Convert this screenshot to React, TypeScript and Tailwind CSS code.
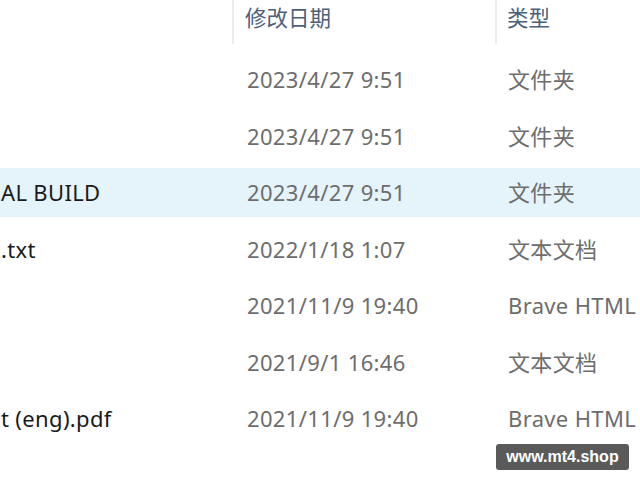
import React from "react";

const rows = [
  { name: "", date: "2023/4/27 9:51", type: "文件夹", hl: false },
  { name: "", date: "2023/4/27 9:51", type: "文件夹", hl: false },
  { name: "AL BUILD", date: "2023/4/27 9:51", type: "文件夹", hl: true },
  { name: ".txt", date: "2022/1/18 1:07", type: "文本文档", hl: false },
  { name: "", date: "2021/11/9 19:40", type: "Brave HTML", hl: false },
  { name: "", date: "2021/9/1 16:46", type: "文本文档", hl: false },
  { name: "t (eng).pdf", date: "2021/11/9 19:40", type: "Brave HTML", hl: false },
];

export default function App() {
  return (
    <div
      className="relative w-[640px] h-[480px] overflow-hidden bg-white"
      style={{ fontFamily: '"Noto Sans", "Open Sans", "Noto Sans CJK SC", sans-serif' }}
    >
      <div className="flex h-[44px] text-[21.5px] text-[#4c607a]">
        <div className="w-[234px] border-r-2 border-[#ececec]" />
        <div className="w-[263px] border-r-2 border-[#ececec] pl-[11px] pb-[7px] flex items-center">
          修改日期
        </div>
        <div className="flex-1 pl-[10px] pb-[7px] flex items-center">类型</div>
      </div>
      <div className="mt-[11px] flex flex-col gap-[7.5px]">
        {rows.map((r, i) => (
          <div
            key={i}
            className={
              "flex h-[49px] items-center text-[22px] tracking-[0.35px] " +
              (r.hl ? "bg-[#e5f3fb]" : "")
            }
          >
            <div className="w-[236px] pl-[1px] text-[#1a1a1a] whitespace-nowrap overflow-hidden">{r.name}</div>
            <div className="w-[262px] pl-[11px] text-[#6d6d6d] whitespace-nowrap">{r.date}</div>
            <div className="flex-1 pl-[10px] text-[#6d6d6d] whitespace-nowrap">{r.type}</div>
          </div>
        ))}
      </div>
      <div
        className="absolute left-[496px] top-[444px] w-[133px] h-[26px] rounded-[3px] bg-[#5a5a5a] text-white text-[16px] font-bold flex items-center justify-center"
        style={{ fontFamily: '"Liberation Sans", Arial, sans-serif' }}
      >
        www.mt4.shop
      </div>
    </div>
  );
}
